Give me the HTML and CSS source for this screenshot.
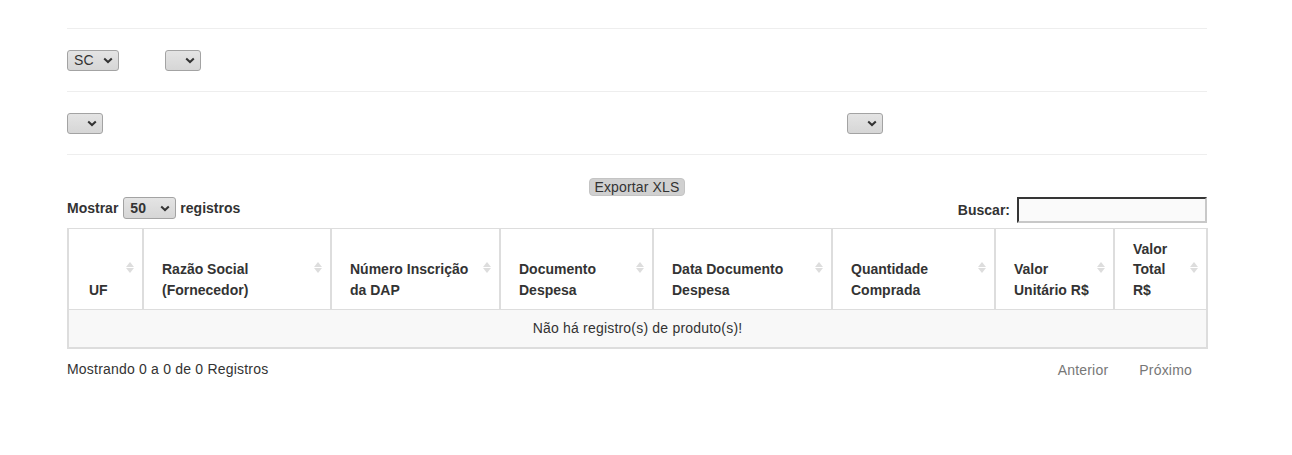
FILE: index.html
```html
<!DOCTYPE html>
<html lang="pt-BR">
<head>
<meta charset="utf-8">
<title>Relatório</title>
<link rel="stylesheet" href="styles.css">
</head>
<body>
<div class="page">
  <hr class="rule">
  <div class="filters filters-top">
    <span class="sel sel-sc"><select><option>SC</option></select><svg class="chev" viewBox="0 0 10 7"><path d="M1.2 1.5l3.8 3.6 3.8-3.6" /></svg></span>
    <span class="sel sel-empty"><select><option></option></select><svg class="chev" viewBox="0 0 10 7"><path d="M1.2 1.5l3.8 3.6 3.8-3.6" /></svg></span>
  </div>
  <hr class="rule">
  <div class="filters filters-bottom">
    <span class="sel sel-empty"><select><option></option></select><svg class="chev" viewBox="0 0 10 7"><path d="M1.2 1.5l3.8 3.6 3.8-3.6" /></svg></span>
    <span class="sel sel-empty"><select><option></option></select><svg class="chev" viewBox="0 0 10 7"><path d="M1.2 1.5l3.8 3.6 3.8-3.6" /></svg></span>
  </div>
  <hr class="rule">

  <div class="export"><button class="btn-export">Exportar XLS</button></div>

  <div class="toolbar">
    <label class="length">Mostrar
      <span class="sel sel-len"><select><option>50</option></select><svg class="chev" viewBox="0 0 10 7"><path d="M1.2 1.5l3.8 3.6 3.8-3.6" /></svg></span>
      registros</label>
    <label class="search">Buscar: <input type="text" class="search-input"></label>
  </div>

  <table class="grid">
    <colgroup>
      <col style="width:75px"><col style="width:188px"><col style="width:169px"><col style="width:153px">
      <col style="width:179px"><col style="width:163px"><col style="width:119px"><col style="width:93px">
    </colgroup>
    <thead>
      <tr>
        <th>UF</th>
        <th>Razão Social (Fornecedor)</th>
        <th>Número Inscrição da DAP</th>
        <th>Documento Despesa</th>
        <th>Data Documento Despesa</th>
        <th>Quantidade Comprada</th>
        <th>Valor Unitário R$</th>
        <th>Valor Total R$</th>
      </tr>
    </thead>
    <tbody>
      <tr class="empty"><td colspan="8">Não há registro(s) de produto(s)!</td></tr>
    </tbody>
  </table>

  <div class="footer">
    <div class="info">Mostrando 0 a 0 de 0 Registros</div>
    <div class="pager"><span class="pg">Anterior</span><span class="pg">Próximo</span></div>
  </div>
</div>
</body>
</html>
```

FILE: styles.css
```css
* { box-sizing: border-box; }
html, body { margin: 0; padding: 0; background: #fff; }
body {
  font-family: "Liberation Sans", Arial, sans-serif;
  font-size: 14px;
  line-height: 20px;
  color: #333;
}
.page {
  width: 1140px;
  margin-left: 67px;
  padding-top: 28px;
}
.rule {
  border: 0;
  border-top: 1px solid #eee;
  margin: 0;
  height: 0;
}
.filters {
  display: flex;
  align-items: center;
  height: 62px;
  padding-top: 0;
}
.filters-top { gap: 46px; }
.filters-bottom { gap: 744px; }

.sel {
  position: relative;
  display: inline-block;
  vertical-align: middle;
}
.sel select {
  appearance: none;
  -webkit-appearance: none;
  display: block;
  height: 21px;
  border: 1px solid #a3a3a3;
  border-radius: 3px;
  background: linear-gradient(#e4e4e4, #d6d6d6);
  font-family: "Liberation Sans", Arial, sans-serif;
  font-size: 14px;
  letter-spacing: 0.2px;
  color: #333;
  padding: 0 0 0 6px;
  margin: 0;
}
.sel-sc select { width: 52px; }
.sel-empty select { width: 36px; }
.sel-len select { width: 53px; height: 22px; font-weight: bold; padding-left: 6px; letter-spacing: 0; }
.chev {
  position: absolute;
  right: 6px;
  top: 50%;
  width: 10px;
  height: 7px;
  margin-top: -3px;
  pointer-events: none;
}
.chev path { fill: none; stroke: #333; stroke-width: 2; }

.export {
  display: flex;
  justify-content: center;
  padding-top: 23px;
}
.btn-export {
  font-family: "Liberation Sans", Arial, sans-serif;
  font-size: 14px;
  letter-spacing: 0.15px;
  color: #333;
  background: #d0d0d0;
  border: 1px solid #c4c4c4;
  border-radius: 4px;
  height: 18px;
  line-height: 16px;
  padding: 0 4px;
  margin: 0;
}

.toolbar {
  display: flex;
  justify-content: space-between;
  align-items: flex-end;
  margin-top: 0;
  height: 27px;
}
.length, .search {
  font-weight: bold;
  display: flex;
  align-items: center;
  gap: 4px;
}
.length { padding-bottom: 4px; gap: 4px; }
.length .sel { margin-left: 1px; }
.search { gap: 7px; padding-bottom: 0; }
.search-input {
  width: 190px;
  height: 26px;
  border: 2px inset #999;
  border-color: #8a8a8a #c8c8c8 #c8c8c8 #8a8a8a;
  background: #fafafa;
  margin: 0;
}

.grid {
  width: 1139px;
  margin-top: 5px;
  border-collapse: collapse;
  table-layout: fixed;
  border: 1px solid #ddd;
}
.grid th {
  position: relative;
  text-align: left;
  vertical-align: bottom;
  font-weight: bold;
  padding: 9px 24px 9px 20px;
  border: 2px solid #ddd;
  border-top-width: 1px;
  border-bottom-width: 1px;
  line-height: 20.5px;
  height: 81px;
}
.grid th:nth-child(1) { padding-left: 20px; }
.grid th:nth-child(n+2) { padding-left: 18px; }
.grid th::before,
.grid th::after {
  content: "";
  position: absolute;
  right: 8px;
  width: 0;
  height: 0;
  border-left: 4px solid transparent;
  border-right: 4px solid transparent;
}
.grid th::before {
  top: 33px;
  border-bottom: 5px solid #ddd;
}
.grid th::after {
  top: 39px;
  border-top: 5px solid #ddd;
}
.grid td {
  border: 2px solid #ddd;
  border-top-width: 1px;
}
.empty td {
  background: #f8f8f8;
  text-align: center;
  padding: 8px;
  height: 38px;
  letter-spacing: 0.2px;
}

.footer {
  display: flex;
  justify-content: space-between;
  margin-top: 10px;
  letter-spacing: 0.2px;
}
.pager {
  display: flex;
  padding-top: 1px;
  padding-right: 15px;
  gap: 31px;
  color: #777;
}
```
